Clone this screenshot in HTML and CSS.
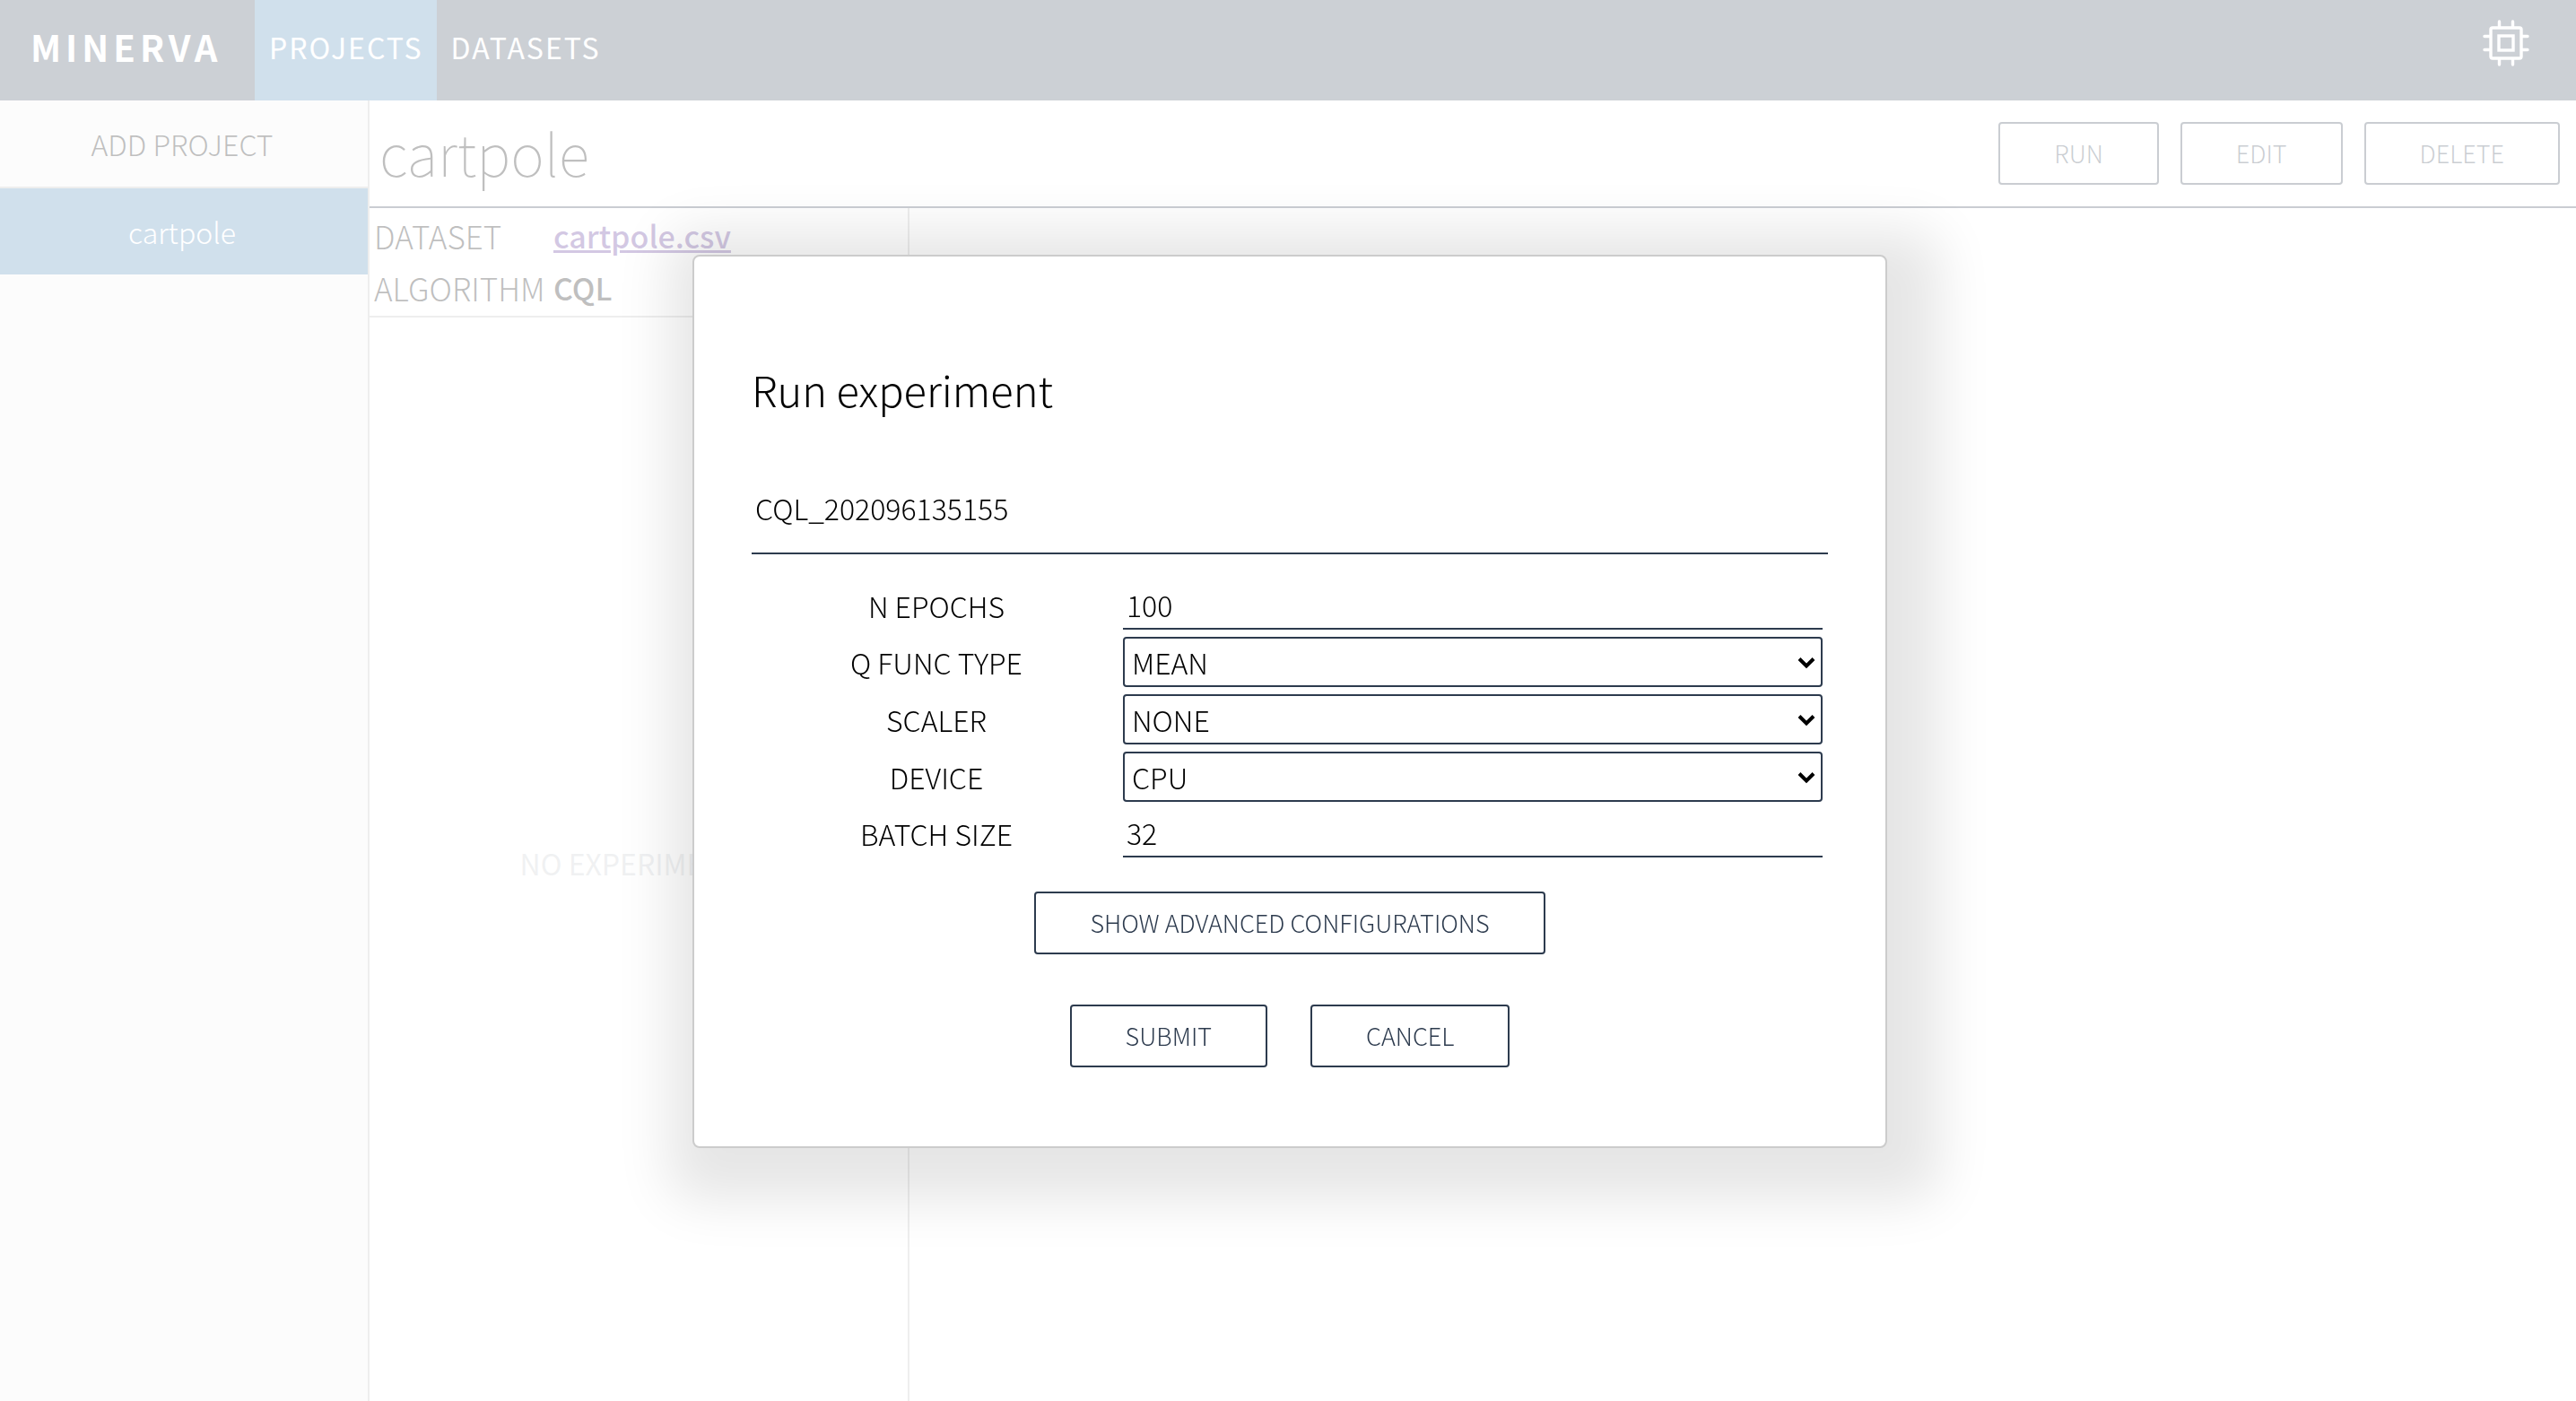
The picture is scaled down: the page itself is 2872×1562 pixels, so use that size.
FILE: index.html
```html
<!DOCTYPE html>
<html lang="en">
<head>
    <meta charset="UTF-8">
    <meta name="viewport" content="width=device-width, initial-scale=1.0">
    <title>MINERVA</title>
    <link rel="stylesheet" href="styles.css">
</head>

<body>
    <header class="header">
        <span class="logo">MINERVA</span>
        <nav class="nav">
            <a class="nav-item active" href="#projects">PROJECTS</a>
            <a class="nav-item" href="#datasets">DATASETS</a>
        </nav>
        <svg class="cpu-icon" viewBox="0 0 52 52" fill="none" stroke="#fff" stroke-width="3.4" stroke-linecap="round" stroke-linejoin="round">
            <rect x="9" y="9" width="34" height="34" rx="2"/>
            <rect x="18" y="18" width="16" height="16" stroke-linejoin="miter"/>
            <path d="M18.500 2v6M33.500 2v6M18.500 44v6M33.500 44v6M2 18.500h6M2 33.500h6M44 18.500h6M44 33.500h6"/>
        </svg>
    </header>

    <div class="content">
        <aside class="sidebar">
            <a class="sidebar-item add" href="#add">ADD PROJECT</a>
            <a class="sidebar-item active" href="#cartpole">cartpole</a>
        </aside>

        <main class="project">
            <div class="project-header">
                <h1 class="project-name">cartpole</h1>
                <div class="project-buttons">
                    <button class="button">RUN</button>
                    <button class="button">EDIT</button>
                    <button class="button">DELETE</button>
                </div>
            </div>
            <div class="project-body">
                <section class="experiments">
                    <table class="info">
                        <tr>
                            <th>DATASET</th>
                            <td><a href="#cartpole.csv">cartpole.csv</a></td>
                        </tr>
                        <tr>
                            <th>ALGORITHM</th>
                            <td>CQL</td>
                        </tr>
                    </table>
                    <p class="empty">NO EXPERIMENTS</p>
                </section>
            </div>
        </main>
    </div>

    <div class="overlay">
        <form class="modal" role="dialog" aria-labelledby="dialog-title">
            <h2 class="modal-title" id="dialog-title">Run experiment</h2>
            <input class="text-input name-input" type="text" aria-label="Experiment name" value="CQL_202096135155">

            <div class="fields">
                <label for="n_epochs">N EPOCHS</label>
                <input class="text-input" type="text" id="n_epochs" value="100">

                <label for="q_func_type">Q FUNC TYPE</label>
                <div class="select">
                    <select id="q_func_type">
                        <option>MEAN</option>
                        <option>QR</option>
                        <option>IQN</option>
                    </select>
                    <svg viewBox="0 0 20 14"><path d="M2 2.500l8 8l8-8"/></svg>
                </div>

                <label for="scaler">SCALER</label>
                <div class="select">
                    <select id="scaler">
                        <option>NONE</option>
                        <option>STANDARD</option>
                    </select>
                    <svg viewBox="0 0 20 14"><path d="M2 2.500l8 8l8-8"/></svg>
                </div>

                <label for="device">DEVICE</label>
                <div class="select">
                    <select id="device">
                        <option>CPU</option>
                        <option>GPU</option>
                    </select>
                    <svg viewBox="0 0 20 14"><path d="M2 2.500l8 8l8-8"/></svg>
                </div>

                <label for="batch_size">BATCH SIZE</label>
                <input class="text-input" type="text" id="batch_size" value="32">
            </div>

            <button class="button advanced" type="button">SHOW ADVANCED CONFIGURATIONS</button>
            <div class="modal-buttons">
                <button class="button" type="button">SUBMIT</button>
                <button class="button" type="button">CANCEL</button>
            </div>
        </form>
    </div>
</body>
</html>
```
FILE: styles.css
```css
* {
    box-sizing: border-box;
}

body {
    display: flex;
    flex-direction: column;
    min-height: 100vh;
    margin: 0;
    font-family: "Noto Sans CJK SC", sans-serif;
    font-size: 32px;
    font-weight: 300;
    line-height: 48px;
    color: #000;
    background-color: #fff;
}

a {
    color: inherit;
    text-decoration: none;
}

input, select, button {
    font: inherit;
    color: inherit;
}

/* header */
.header {
    display: flex;
    align-items: center;
    height: 112px;
    padding-right: 52px;
    color: #fff;
    background-color: #37455a;
}

.logo {
    width: 284px;
    padding: 0 0 8px 34px;
    font-size: 40px;
    font-weight: 700;
    letter-spacing: 5px;
}

.nav {
    display: flex;
    flex: 1;
}

.nav-item {
    padding: 28px 15px 36px 16px;
    font-weight: 400;
    letter-spacing: 2px;
}

.nav-item.active, .sidebar-item.active {
    color: #fff;
    background-color: steelblue;
}

.cpu-icon {
    width: 52px;
    height: 52px;
    margin-bottom: 16px;
}

/* sidebar */
.content {
    display: flex;
    flex: 1;
}

.sidebar {
    width: 412px;
    border-right: 2px solid #bbb;
    background-color: #f2f2f2;
}

.sidebar-item {
    display: block;
    padding: 24px 4px 24px 0;
    text-align: center;
}

.sidebar-item.add {
    border-bottom: 2px solid #bbb;
}

/* project */
.project {
    display: flex;
    flex: 1;
    flex-direction: column;
}

.project-header {
    display: flex;
    align-items: center;
    justify-content: space-between;
    height: 120px;
    padding: 0 18px 0 11px;
    border-bottom: 2px solid #2d3b4e;
}

.project-name {
    margin: 0;
    padding-bottom: 4px;
    font-size: 64px;
    font-weight: 100;
    line-height: 94px;
}

.project-buttons {
    display: flex;
    gap: 24px;
}

.button {
    padding: 0 60px;
    border: 2px solid #2d3b4e;
    border-radius: 4px;
    background-color: #fff;
    color: #2d3b4e;
    font-size: 27px;
    line-height: 66px;
    cursor: pointer;
}

.project-body {
    display: flex;
    flex: 1;
}

.experiments {
    display: flex;
    flex-direction: column;
    width: 602px;
    border-right: 2px solid #bbb;
}

.info {
    padding: 2px 0;
    border-spacing: 0;
    border-bottom: 2px solid #bbb;
    font-size: 35px;
    line-height: 58px;
}

.info th {
    width: 205px;
    padding: 0 0 0 5px;
    font-weight: 300;
    text-align: left;
}

.info td {
    padding: 0;
    font-size: 34px;
    font-weight: 500;
}

.info a {
    color: #51278f;
    text-decoration: underline;
}

.empty {
    margin: auto;
    padding-top: 8px;
    color: #c3c7cc;
    font-weight: 400;
}

/* dialog */
.overlay {
    position: fixed;
    inset: 0;
    display: flex;
    align-items: center;
    justify-content: center;
    padding: 2px 0 0 4px;
    background-color: rgba(255, 255, 255, 0.75);
}

.modal {
    display: flex;
    flex-direction: column;
    width: 1332px;
    max-width: 100%;
    padding: 112px 64px 88px;
    border: 2px solid #ccc;
    border-radius: 8px;
    background-color: #fff;
    box-shadow: 16px 16px 60px 42px rgba(0, 0, 0, 0.1);
}

.modal-title {
    margin: 0 0 60px;
    font-size: 47px;
    font-weight: 300;
    line-height: 72px;
}

.text-input {
    width: 100%;
    height: 54px;
    padding: 0 4px;
    border: 0;
    border-bottom: 2px solid #2d3b4e;
    background: none;
    outline: 0;
}

.name-input {
    height: 88px;
    padding-bottom: 14px;
}

.fields {
    display: grid;
    grid-template-columns: 414fr 780fr;
    row-gap: 8px;
    align-items: center;
    padding: 30px 6px 38px 0;
}

.fields label {
    padding-right: 2px;
    text-align: center;
}

.select {
    position: relative;
}

.select select {
    display: block;
    width: 100%;
    height: 56px;
    padding: 0 8px;
    border: 2px solid #2d3b4e;
    border-radius: 4px;
    background-color: #fff;
    appearance: none;
}

.select svg {
    position: absolute;
    top: 22px;
    right: 8px;
    width: 20px;
    height: 14px;
    fill: none;
    stroke: #000;
    stroke-width: 4;
    pointer-events: none;
}

.advanced {
    align-self: center;
}

.modal-buttons {
    display: flex;
    justify-content: center;
    gap: 48px;
    margin-top: 56px;
}
```
